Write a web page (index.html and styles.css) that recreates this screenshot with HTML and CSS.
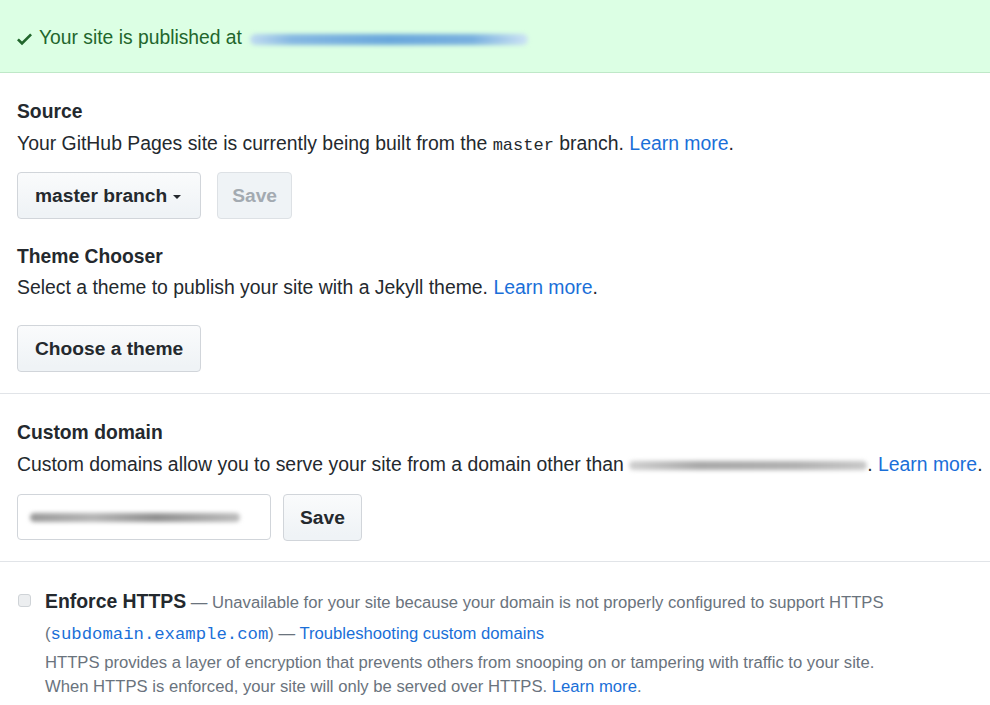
FILE: index.html
```html
<!DOCTYPE html>
<html>
<head>
<meta charset="utf-8">
<link rel="stylesheet" href="styles.css">
</head>
<body>
<div class="flash">
  <svg class="check" viewBox="0 0 12 16" width="15" height="20"><path fill="#22662c" d="M12 5l-8 8-4-4 1.5-1.5L4 10l6.5-6.5L12 5z"/></svg>
  <span>Your site is published at</span>
  <span class="blur-link"></span>
</div>

<div class="section">
  <h3 class="heading">Source</h3>
  <p class="desc">Your GitHub Pages site is currently being built from the <code>master</code> branch. <a href="#">Learn more</a>.</p>
  <div class="row row-source">
    <button class="btn btn-select">master branch <span class="caret"></span></button>
    <button class="btn btn-disabled">Save</button>
  </div>

  <h3 class="heading heading-theme">Theme Chooser</h3>
  <p class="desc desc-theme">Select a theme to publish your site with a Jekyll theme. <a href="#">Learn more</a>.</p>
  <div class="row row-theme">
    <button class="btn">Choose a theme</button>
  </div>
</div>

<hr class="divider divider-1">

<div class="section">
  <h3 class="heading heading-domain">Custom domain</h3>
  <p class="desc desc-nowrap">Custom domains allow you to serve your site from a domain other than <span class="blur-grey"></span>. <a href="#">Learn more</a>.</p>
  <div class="row row-domain">
    <div class="input"><span class="blur-input"></span></div>
    <button class="btn">Save</button>
  </div>
</div>

<hr class="divider divider-2">

<div class="section https">
  <div class="https-row">
    <span class="checkbox"></span>
    <div class="https-body">
      <p class="https-line1"><strong>Enforce HTTPS</strong> — Unavailable for your site because your domain is not properly configured to support HTTPS</p>
      <p class="https-line2">(<a href="#" class="mono">subdomain.example.com</a>) — <a href="#">Troubleshooting custom domains</a></p>
      <p class="https-note">HTTPS provides a layer of encryption that prevents others from snooping on or tampering with traffic to your site.<br>When HTTPS is enforced, your site will only be served over HTTPS. <a href="#">Learn more</a>.</p>
    </div>
  </div>
</div>
</body>
</html>
```

FILE: styles.css
```css
* { box-sizing: border-box; }
body {
  margin: 0;
  background: #fff;
  font-family: "Liberation Sans", Arial, sans-serif;
  color: #24292e;
  font-size: 19.4px;
}
p, h3 { margin: 0; }
a { color: #1a6fd8; text-decoration: none; }

.flash {
  height: 73px;
  background: #dcffe4;
  border-bottom: 1px solid #bfe8c8;
  color: #22662c;
  font-size: 19.3px;
  display: flex;
  align-items: center;
  padding: 4px 17px 0 17px;
}
.check { margin-right: 7px; margin-top: 1px; }
.blur-link {
  display: inline-block;
  width: 278px;
  height: 11px;
  margin-left: 8px;
  margin-top: 2px;
  border-radius: 6px;
  background: linear-gradient(90deg, #c0dcf0 0%, #86b8e2 15%, #6aa8dc 50%, #79b0df 80%, #cde4f4 100%);
  filter: blur(2px);
}

.section { padding: 0 17px; }
.heading {
  font-size: 19.3px;
  font-weight: bold;
  line-height: 24px;
  margin-top: 27px;
}
.desc {
  line-height: 28px;
  margin-top: 5px;
}
.desc-nowrap { white-space: nowrap; }
code {
  font-family: "Liberation Mono", monospace;
  font-size: 17px;
}
.row { display: flex; }
.row-source { margin-top: 12px; gap: 16px; }
.heading-theme { margin-top: 26px; }
.desc-theme { margin-top: 4px; }
.row-theme { margin-top: 24px; }
.btn {
  height: 47px;
  padding: 0 17px;
  font-family: "Liberation Sans", Arial, sans-serif;
  font-size: 19.2px;
  font-weight: bold;
  color: #24292e;
  background: linear-gradient(#fafbfc, #eff3f6 90%);
  border: 1px solid #d1d5da;
  border-radius: 4px;
  display: inline-flex;
  align-items: center;
}
.btn-select { padding-right: 19px; }
.btn-disabled {
  color: #a3aab1;
  background: #eff3f6;
  border-color: #dde1e5;
  padding: 0 14px;
}
.caret {
  display: inline-block;
  width: 0;
  height: 0;
  margin-left: 6px;
  margin-top: 2px;
  border-left: 4px solid transparent;
  border-right: 4px solid transparent;
  border-top: 4px solid #24292e;
}

.divider {
  border: 0;
  border-top: 1px solid #e1e4e8;
  margin: 0;
}
.divider-1 { margin-top: 21px; }
.heading-domain { margin-top: 27px; }
.blur-grey {
  display: inline-block;
  width: 238px;
  height: 9px;
  vertical-align: middle;
  border-radius: 5px;
  background: linear-gradient(90deg, #d0d0d0, #a8a8a8 30%, #b0b0b0 70%, #c8c8c8);
  filter: blur(2px);
}
.row-domain { margin-top: 16px; gap: 12px; }
.input {
  width: 254px;
  height: 46px;
  border: 1px solid #d1d5da;
  border-radius: 4px;
  display: flex;
  align-items: center;
  padding-left: 12px;
}
.blur-input {
  display: inline-block;
  width: 210px;
  height: 9px;
  border-radius: 5px;
  background: linear-gradient(90deg, #9a9a9a, #b5b5b5 30%, #8f8f8f 60%, #bdbdbd);
  filter: blur(2.2px);
}
.row-domain .btn { padding: 0 16px; }
.divider-2 { margin-top: 20px; }

.https { padding-top: 27px; }
.https-row { display: flex; }
.checkbox {
  width: 13px;
  height: 13px;
  margin-left: 1px;
  margin-top: 5px;
  border: 1px solid #cfd3d7;
  border-radius: 3px;
  background: #eceef0;
  flex: none;
}
.https-body { margin-left: 14px; }
.https-line1 {
  font-size: 16.65px;
  color: #6a737d;
  line-height: 24px;
}
.https-line1 strong {
  font-size: 19.4px;
  color: #24292e;
}
.https-line2 {
  font-size: 16.65px;
  color: #6a737d;
  line-height: 24px;
  margin-top: 7px;
}
.mono {
  font-family: "Liberation Mono", monospace;
  font-size: 17.3px;
}
.https-note {
  font-size: 16.65px;
  color: #6a737d;
  line-height: 24px;
  margin-top: 4px;
}
```
